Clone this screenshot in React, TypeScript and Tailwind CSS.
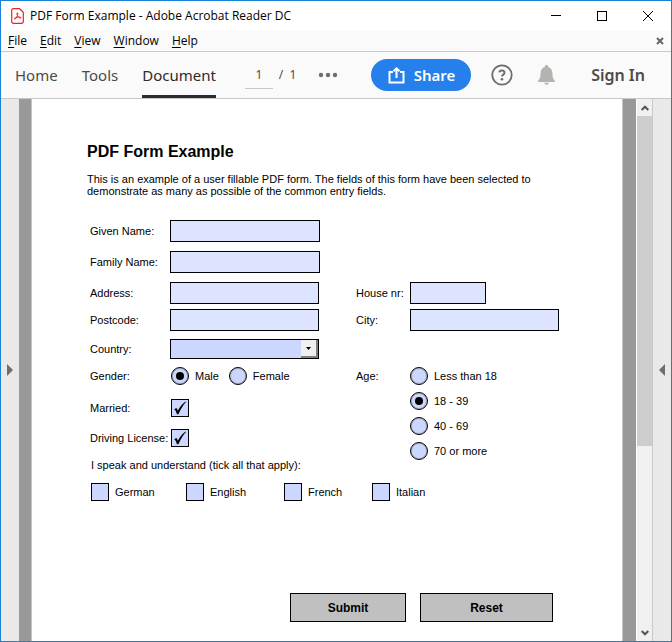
import { useState } from "react";
import type { ReactNode } from "react";

function AcrobatIcon() {
  return (
    <svg width="13" height="16" viewBox="0 0 13 16" fill="none" stroke="#e5252a" aria-hidden="true">
      <path d="M2.200 .7h6.300l3.800 3.600v9.200a1.800 1.800 0 0 1-1.800 1.800H2.500a1.800 1.800 0 0 1-1.800-1.800V2.200A1.500 1.500 0 0 1 2.200.7z" strokeWidth="1.200" />
      <path
        d="M6.200 4.800c.9 0 .8 1.500.2 2.900-.7 1.700-1.800 3.500-2.600 3.500-.9 0-.4-1.200 1-1.700 1.500-.5 3.200-.7 4.400-.4 1.200.4 1 1.200.2 1.100-1.100-.1-2.300-1.400-3-2.800-.5-1-.8-2.600-.2-2.600z"
        strokeWidth="1"
      />
    </svg>
  );
}

function TitleBar() {
  return (
    <header className="flex h-[30px] items-center bg-white pl-[10px]">
      <AcrobatIcon />
      <h1 className="ml-[6px] flex-1 font-['Open_Sans',sans-serif] text-[12px] leading-4 whitespace-nowrap text-black">
        PDF Form Example - Adobe Acrobat Reader DC
      </h1>
      <button type="button" aria-label="Minimize" className="flex h-full w-[46px] items-center justify-center">
        <svg width="10" height="10" stroke="#000" aria-hidden="true">
          <path d="M0 4.500h10" />
        </svg>
      </button>
      <button type="button" aria-label="Maximize" className="flex h-full w-[46px] items-center justify-center">
        <svg width="10" height="10" fill="none" stroke="#000" aria-hidden="true">
          <rect x=".5" y=".5" width="9" height="9" />
        </svg>
      </button>
      <button type="button" aria-label="Close" className="flex h-full w-[46px] items-center justify-center">
        <svg width="10" height="10" stroke="#000" aria-hidden="true">
          <path d="M0 0l10 10M10 0L0 10" />
        </svg>
      </button>
    </header>
  );
}

function MenuBar() {
  return (
    <nav className="flex h-[21px] items-center gap-[13px] border-b border-[#c8c8c8] bg-[#fafafa] px-[7px] font-['Open_Sans',sans-serif] text-[12px] leading-4 text-black">
      {["File", "Edit", "View", "Window", "Help"].map((item) => (
        <button key={item} type="button" className="underline-offset-2">
          <span className="underline">{item[0]}</span>
          {item.slice(1)}
        </button>
      ))}
      <button type="button" aria-label="Close document" className="ml-auto">
        <svg width="8" height="8" stroke="#666" strokeWidth="2" aria-hidden="true">
          <path d="M1 1l6 6M7 1L1 7" />
        </svg>
      </button>
    </nav>
  );
}

function Toolbar() {
  return (
    <div className="flex h-[47px] items-center border-b border-[#c8c8c8] bg-[#fafafa] pr-[26px] pl-[14px] text-[15px] leading-5 text-[#4b4b4b]">
      <button type="button">Home</button>
      <button type="button" className="ml-6">Tools</button>
      <button type="button" className="ml-6 self-stretch border-y-3 border-t-transparent border-b-[#2c2c2c] text-[#2c2c2c]">
        Document
      </button>
      <input
        aria-label="Page number"
        defaultValue="1"
        className="ml-[29px] h-[27px] w-7 border-b border-[#c8c8c8] bg-transparent text-center text-[12px] outline-none"
      />
      <span className="ml-[6px] text-[12px] whitespace-pre">/  1</span>
      <button type="button" aria-label="More tools" className="ml-[22px]">
        <svg width="20" height="6" fill="#6e6e6e" aria-hidden="true">
          <circle cx="3" cy="3" r="2.200" />
          <circle cx="10" cy="3" r="2.200" />
          <circle cx="17" cy="3" r="2.200" />
        </svg>
      </button>
      <button
        type="button"
        className="ml-[33px] flex h-8 w-[100px] items-center justify-center gap-[9px] rounded-full bg-[#2680eb] font-semibold text-white"
      >
        <svg width="17" height="17" viewBox="0 0 17 17" fill="none" stroke="#fff" strokeWidth="2" aria-hidden="true">
          <path d="M5 5H1.500v10.500h14V5H12M8.500 11V2M5.500 4.300L8.500 1.400l3 2.900" />
        </svg>
        Share
      </button>
      <button type="button" aria-label="Help" className="ml-5">
        <svg width="22" height="22" viewBox="0 0 22 22" fill="none" stroke="#6e6e6e" aria-hidden="true">
          <circle cx="11" cy="11" r="9.700" strokeWidth="1.800" />
          <path d="M8.300 8.300c.4-2.500 5.200-2.400 5.200.4 0 2-2.500 1.900-2.500 3.900" strokeWidth="2" />
          <circle cx="11" cy="15.300" r="1.300" fill="#6e6e6e" stroke="none" />
        </svg>
      </button>
      <button type="button" aria-label="Notifications" className="ml-[25px]">
        <svg width="17" height="20" viewBox="0 0 17 20" fill="#b3b3b0" aria-hidden="true">
          <path d="M8.500 0a1.600 1.600 0 0 1 1.600 1.900c2.800.8 4.200 2.900 4.300 6 .1 4.700.8 6 2.600 8.100v1H0v-1c1.800-2.100 2.500-3.400 2.600-8.100.1-3.100 1.500-5.200 4.300-6A1.600 1.600 0 0 1 8.500 0z" />
          <path d="M6.200 17.800h4.600a2.300 2 0 0 1-4.600 0z" />
        </svg>
      </button>
      <button type="button" className="ml-auto text-[16px] font-semibold">Sign In</button>
    </div>
  );
}

function TextField({ id, label, width, side = false }: { id: string; label: string; width: string; side?: boolean }) {
  return (
    <div className="flex items-center">
      <label htmlFor={id} className={side ? "w-[54px] whitespace-nowrap" : "w-20 whitespace-nowrap"}>
        {label}
      </label>
      <input
        id={id}
        type="text"
        className={`h-[22px] border border-black bg-[#dde4ff] px-1 outline-none ${width}`}
      />
    </div>
  );
}

function Radio({ name, value, checked }: { name: string; value: string; checked?: boolean }) {
  return (
    <label className="flex items-center gap-[6px] whitespace-nowrap">
      <span className="grid size-[18px] place-items-center">
        <input
          type="radio"
          name={name}
          value={value}
          defaultChecked={checked}
          className="peer col-start-1 row-start-1 size-[18px] appearance-none rounded-full border border-black bg-[#ccd7ff] shadow-[inset_0_0_0_1px_#a9aebf]"
        />
        <span className="pointer-events-none invisible col-start-1 row-start-1 size-2 rounded-full bg-black peer-checked:visible" />
      </span>
      {value}
    </label>
  );
}

function Tick({ id, checked }: { id: string; checked?: boolean }) {
  return (
    <span className="grid size-[18px] shrink-0 place-items-center">
      <input
        id={id}
        type="checkbox"
        defaultChecked={checked}
        className="peer col-start-1 row-start-1 size-[18px] appearance-none border border-black bg-[#ccd7ff]"
      />
      <svg
        width="14"
        height="16"
        viewBox="0 0 14 16"
        aria-hidden="true"
        className="pointer-events-none invisible col-start-1 row-start-1 peer-checked:visible"
      >
        <path d="M1.300 9.300l2-1.200c.8.700 1.200 1.600 1.500 2.700C6.600 7 9 4 12.600 1.400l.4.600C10 5.300 7.600 9.200 5.700 13.800l-1.700.6C3.500 12.400 2.700 10.600 1.300 9.300z" />
      </svg>
    </span>
  );
}

function TickRow({ id, label }: { id: string; label: string }) {
  return (
    <div className="flex items-center">
      <label htmlFor={id} className="w-[81px] whitespace-nowrap">{label}</label>
      <Tick id={id} checked />
    </div>
  );
}

function CountryField() {
  const [country, setCountry] = useState("");
  return (
    <div className="flex items-center">
      <label htmlFor="country" className="w-20">Country:</label>
      <span className="relative">
        <select
          id="country"
          value={country}
          onChange={(e) => setCountry(e.target.value)}
          className="block h-5 w-[149px] appearance-none border border-black bg-[#ccd7ff] pl-1 outline-none"
        >
          <option value=""></option>
          <option value="at">Austria</option>
          <option value="de">Germany</option>
          <option value="uk">United Kingdom</option>
        </select>
        <span className="pointer-events-none absolute inset-y-px right-px flex w-[17px] items-center justify-center border-r-2 border-b-2 border-[#808080] bg-[#f0f0f0]">
          <svg width="5" height="3" aria-hidden="true">
            <path d="M0 0h5L2.500 3z" />
          </svg>
        </span>
      </span>
    </div>
  );
}

function FormButton({ type, className, children }: { type: "submit" | "reset"; className: string; children: ReactNode }) {
  return (
    <button type={type} className={`h-[29px] border border-black bg-[#c0c0c0] text-[12px] font-bold ${className}`}>
      {children}
    </button>
  );
}

function FormPage() {
  return (
    <main className="flex-1 border-x border-[#c4c4c4] bg-white pt-[43px] pb-[18px] pl-[55px] font-['Liberation_Sans',Arial,sans-serif] text-[11px] leading-3 text-black">
      <h2 className="text-[16px] leading-5 font-bold">PDF Form Example</h2>
      <p className="mt-[11px] max-w-[460px]">
        This is an example of a user fillable PDF form. The fields of this form have been selected to demonstrate as many as
        possible of the common entry fields.
      </p>
      <form className="mt-[23px] pl-[3px]" onSubmit={(e) => e.preventDefault()}>
        <TextField id="given" label="Given Name:" width="w-[150px]" />
        <div className="mt-[9px]">
          <TextField id="family" label="Family Name:" width="w-[150px]" />
        </div>
        <div className="mt-[9px] flex gap-[37px]">
          <TextField id="address" label="Address:" width="w-[149px]" />
          <TextField id="house" label="House nr:" width="w-[76px]" side />
        </div>
        <div className="mt-[5px] flex gap-[37px]">
          <TextField id="postcode" label="Postcode:" width="w-[149px]" />
          <TextField id="city" label="City:" width="w-[149px]" side />
        </div>
        <div className="mt-2">
          <CountryField />
        </div>
        <div className="mt-2 flex">
          <div className="w-[266px]">
            <div role="radiogroup" aria-label="Gender" className="flex items-center">
              <span className="w-[81px]">Gender:</span>
              <Radio name="gender" value="Male" checked />
              <span className="ml-[10px]">
                <Radio name="gender" value="Female" />
              </span>
            </div>
            <div className="mt-[14px] flex flex-col gap-3">
              <TickRow id="married" label="Married:" />
              <TickRow id="license" label="Driving License:" />
              <p className="pl-px">I speak and understand (tick all that apply):</p>
            </div>
          </div>
          <div role="radiogroup" aria-label="Age" className="flex">
            <span className="w-[54px] pt-[3px]">Age:</span>
            <div className="flex flex-col gap-[7px]">
              <Radio name="age" value="Less than 18" />
              <Radio name="age" value="18 - 39" checked />
              <Radio name="age" value="40 - 69" />
              <Radio name="age" value="70 or more" />
            </div>
          </div>
        </div>
        <div className="mt-3 grid grid-cols-[95px_98px_88px_auto] pl-px">
          {["German", "English", "French", "Italian"].map((language) => (
            <div key={language} className="flex items-center gap-[6px]">
              <Tick id={language} />
              <label htmlFor={language}>{language}</label>
            </div>
          ))}
        </div>
        <div className="mt-[92px] ml-[200px] flex gap-[14px]">
          <FormButton type="submit" className="w-[116px]">Submit</FormButton>
          <FormButton type="reset" className="w-[133px]">Reset</FormButton>
        </div>
      </form>
    </main>
  );
}

function ScrollBar() {
  return (
    <div className="flex w-[17px] flex-col border-x border-l-white border-r-[#c8c8c8] bg-[#f0f0f0]">
      <button type="button" aria-label="Scroll up" className="flex h-[17px] items-center justify-center">
        <svg width="8" height="6" fill="none" stroke="#555" strokeWidth="2" aria-hidden="true">
          <path d="M.7 5L4 1.700 7.300 5" />
        </svg>
      </button>
      <div className="flex flex-1 flex-col">
        <div className="flex-[13] bg-[#cdcdcd]" />
        <div className="flex-[7]" />
      </div>
      <button type="button" aria-label="Scroll down" className="flex h-[17px] items-center justify-center">
        <svg width="8" height="6" fill="none" stroke="#555" strokeWidth="2" aria-hidden="true">
          <path d="M.7 1L4 4.300 7.300 1" />
        </svg>
      </button>
    </div>
  );
}

export default function App() {
  return (
    <div className="flex min-h-screen flex-col border border-[#1883d7] bg-white font-['Noto_Sans','Open_Sans',sans-serif]">
      <TitleBar />
      <MenuBar />
      <Toolbar />
      <div className="flex flex-1">
        <button type="button" aria-label="Show left pane" className="flex w-[18px] items-center justify-center bg-[#e9e9e9]">
          <svg width="6" height="12" fill="#6e6e6e" aria-hidden="true">
            <path d="M0 0l6 6-6 6z" />
          </svg>
        </button>
        <div className="w-3 bg-[#999]" />
        <FormPage />
        <div className="w-[13px] bg-[#999]" />
        <ScrollBar />
        <button type="button" aria-label="Show right pane" className="flex w-[18px] items-center justify-center bg-[#e9e9e9]">
          <svg width="6" height="12" fill="#6e6e6e" aria-hidden="true">
            <path d="M6 0L0 6l6 6z" />
          </svg>
        </button>
      </div>
    </div>
  );
}
